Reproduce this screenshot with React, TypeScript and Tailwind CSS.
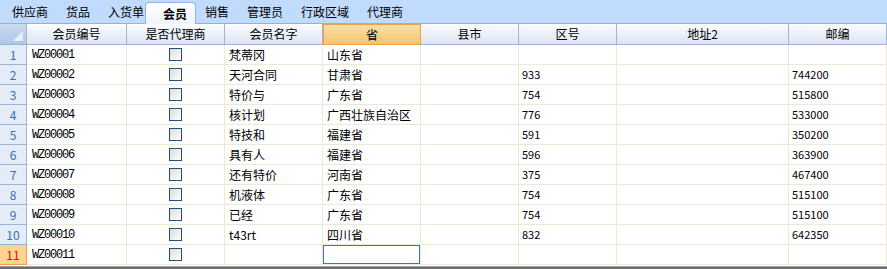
import React from 'react';

const tabs = ['供应商', '货品', '入货单', '会员', '销售', '管理员', '行政区域', '代理商'];

const cols = ['会员编号', '是否代理商', '会员名字', '省', '县市', '区号', '地址2', '邮编'];

// id, name, province, area code, zip
const rows: [string, string, string, string, string][] = [
  ['WZ00001', '梵蒂冈', '山东省', '', ''],
  ['WZ00002', '天河合同', '甘肃省', '933', '744200'],
  ['WZ00003', '特价与', '广东省', '754', '515800'],
  ['WZ00004', '核计划', '广西壮族自治区', '776', '533000'],
  ['WZ00005', '特技和', '福建省', '591', '350200'],
  ['WZ00006', '具有人', '福建省', '596', '363900'],
  ['WZ00007', '还有特价', '河南省', '375', '467400'],
  ['WZ00008', '机液体', '广东省', '754', '515100'],
  ['WZ00009', '已经', '广东省', '754', '515100'],
  ['WZ00010', 't43rt', '四川省', '832', '642350'],
  ['WZ00011', '', '', '', ''],
];

const gridCols = 'grid grid-cols-[27px_100px_98px_98px_98px_98px_98px_172px_98px]';

function Check() {
  return (
    <div className="w-[13px] h-[13px] border border-[#1c5180] bg-gradient-to-br from-[#dcdcd6] to-[#ffffff]" />
  );
}

export default function App() {
  return (
    <div
      className="w-[887px] h-[269px] overflow-hidden bg-white flex flex-col text-[12px] text-black"
      style={{ fontFamily: '"Noto Sans CJK SC", "Liberation Sans", sans-serif' }}
    >
      {/* Tabs */}
      <div className="h-[24px] shrink-0 bg-[#c1dbfc] border-b border-[#8db2e3] flex items-end pl-[3px]">
        {tabs.map((t) =>
          t === '会员' ? (
            <div
              key={t}
              className="h-[22px] -mb-px -ml-[8px] pl-[17px] pr-[8px] flex items-center font-bold rounded-t-[4px] border border-b-0 border-[#8db2e3] bg-gradient-to-b from-[#ffffff] to-[#eef4fd]"
            >
              {t}
            </div>
          ) : (
            <div key={t} className="h-[22px] px-[9px] flex items-center">
              {t}
            </div>
          )
        )}
      </div>

      {/* Header row */}
      <div className={`${gridCols} h-[21px] shrink-0`}>
        <div className="relative border-r border-b border-[#9ab5d6] bg-gradient-to-b from-[#c9dbf0] to-[#aec6e6]">
          <div className="absolute right-[3px] bottom-[3px] w-0 h-0 border-l-[10px] border-l-transparent border-b-[10px] border-b-[#e8eef7]" />
        </div>
        {cols.map((c) => (
          <div
            key={c}
            className={
              c === '省'
                ? 'flex items-center justify-center border border-[#f0a048] bg-gradient-to-b from-[#fbe0a8] to-[#f4c370]'
                : 'flex items-center justify-center border-r border-b border-[#9ab5d6] bg-gradient-to-b from-[#fbfcfe] to-[#dce5f1]'
            }
          >
            {c}
          </div>
        ))}
      </div>

      {/* Data rows */}
      {rows.map((r, i) => {
        const last = i === rows.length - 1;
        return (
          <div key={r[0]} className={`${gridCols} h-[20px] shrink-0`}>
            <div
              className={
                last
                  ? 'flex items-center justify-center border-r border-b border-[#f0a048] bg-[#fed590] text-[#ff0000]'
                  : 'flex items-center justify-center border-r border-b border-[#9ab5d6] bg-[#e4ecf7] text-[#3b6fb0]'
              }
            >
              {i + 1}
            </div>
            <div
              className="flex items-center pl-[5px] border-r border-b border-[#ece9d8] text-[12px] tracking-[-1.2px]"
              style={{ fontFamily: '"Liberation Mono", monospace' }}
            >
              {r[0]}
            </div>
            <div className="flex items-center justify-center border-r border-b border-[#ece9d8]">
              <Check />
            </div>
            <div className="flex items-center pl-[4px] border-r border-b border-[#ece9d8]">{r[1]}</div>
            {last ? (
              <div className="border-r border-b border-[#ece9d8]">
                <div className="h-full border border-[#3a74d0] bg-white" />
              </div>
            ) : (
              <div className="flex items-center pl-[4px] border-r border-b border-[#ece9d8]">{r[2]}</div>
            )}
            <div className="border-r border-b border-[#ece9d8]" />
            <div className="flex items-center pl-[3px] border-r border-b border-[#ece9d8] text-[11px]">{r[3]}</div>
            <div className="border-r border-b border-[#ece9d8]" />
            <div className="flex items-center pl-[3px] border-r border-b border-[#ece9d8] text-[11px]">{r[4]}</div>
          </div>
        );
      })}

      <div className="flex-1 bg-white" />
      <div className="h-[3px] shrink-0 bg-[#6e6e6e] border-t border-[#a0a0a0]" />
    </div>
  );
}
